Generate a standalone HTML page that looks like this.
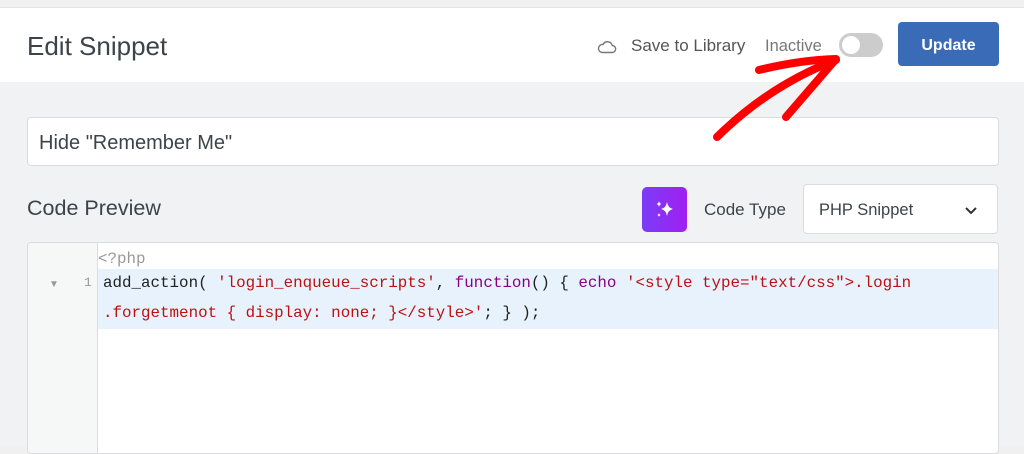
<!DOCTYPE html><html><head><style>
body{margin:0;width:1024px;height:446px;overflow:hidden;background:#f0f0f1;font-family:"Liberation Sans",sans-serif;position:relative}
.hdr{position:absolute;top:7px;left:0;width:1024px;height:74px;background:#fff;border-top:1px solid #e2e4e7;border-bottom:1px solid #dcdde0}
.body{position:absolute;top:82px;left:0;width:1024px;height:364px;background:#f1f2f4}
.abs{position:absolute}
.mono{font-family:"Liberation Mono",monospace;font-size:15.85px}
</style></head><body>
<div class="hdr">
<div class="abs" style="left:27px;top:23px;font-size:26px;color:#3c434a">Edit Snippet</div>
<svg class="abs" style="left:597px;top:32px" width="20" height="14" viewBox="0 0 20 14"><path d="M5 12.5h10a3.5 3.5 0 0 0 .3-7A5 5 0 0 0 6 4.5 4 4 0 0 0 5 12.5z" fill="none" stroke="#777" stroke-width="1.4"/></svg>
<div class="abs" style="left:631px;top:28px;font-size:17px;color:#555">Save to Library</div>
<div class="abs" style="left:765px;top:29px;font-size:16.5px;color:#777">Inactive</div>
<div class="abs" style="left:839px;top:25px;width:44px;height:24px;border-radius:12px;background:#ccc"><div style="position:absolute;left:3px;top:3px;width:18px;height:18px;border-radius:50%;background:#fff"></div></div>
<div class="abs" style="left:898px;top:14px;width:101px;height:44px;border-radius:4px;background:#3a6bb7;color:#fff;font-weight:bold;font-size:16px;text-align:center;line-height:48px">Update</div>
</div>
<div class="body"></div>
<div class="abs" style="left:27px;top:117px;width:970px;height:47px;background:#fff;border:1px solid #dcdcde;border-radius:4px"><div style="position:absolute;left:11px;top:14px;font-size:20px;color:#3c434a">Hide "Remember Me"</div></div>
<div class="abs" style="left:27px;top:196px;font-size:21.5px;color:#3c434a">Code Preview</div>
<div class="abs" style="left:642px;top:187px;width:45px;height:45px;border-radius:5px;background:linear-gradient(90deg,#7b3cf7,#a020f0)"><svg width="45" height="45" viewBox="0 0 45 45"><path d="M25 15q1 6 6 7-5 1-6 7-1-6-6-7 5-1 6-7z" fill="#fff"/><path d="M17 14q.5 2.5 2.5 3-2 .5-2.5 3-.5-2.5-2.5-3 2-.5 2.5-3z" fill="#fff"/><path d="M17 26q.4 1.7 1.8 2-1.4.3-1.8 2-.4-1.7-1.8-2 1.4-.3 1.8-2z" fill="#fff"/></svg></div>
<div class="abs" style="left:704px;top:200px;font-size:17px;color:#3c434a">Code Type</div>
<div class="abs" style="left:803px;top:184px;width:193px;height:48px;background:#fff;border:1px solid #dcdcde;border-radius:4px"><div style="position:absolute;left:15px;top:16px;font-size:16.5px;color:#3c434a">PHP Snippet</div><svg style="position:absolute;left:160px;top:21px" width="14" height="9"><path d="M2 2l5 5 5-5" fill="none" stroke="#333" stroke-width="2"/></svg></div>
<div class="abs" style="left:27px;top:242px;width:970px;height:210px;background:#fff;border:1px solid #dcdcde;border-radius:4px;overflow:hidden">
<div style="position:absolute;left:0;top:0;width:69px;height:100%;background:#f6f7f7;border-right:1px solid #dcdcde"></div>
<div style="position:absolute;left:70px;top:26px;width:900px;height:60px;background:#e8f2fd"></div>
<div class="mono" style="position:absolute;left:70px;top:7px;color:#999">&lt;?php</div>
<div style="position:absolute;left:21px;top:36px;font-size:10px;color:#999">▼</div>
<div class="mono" style="position:absolute;left:56px;top:32px;color:#999;font-size:13px">1</div>
<div class="mono" style="position:absolute;left:75px;top:31px;color:#222;white-space:pre">add_action( <span style="color:#b11">'login_enqueue_scripts'</span>, <span style="color:#808">function</span>() { <span style="color:#808">echo</span> <span style="color:#b11">'&lt;style type="text/css"&gt;.login</span></div>
<div class="mono" style="position:absolute;left:75px;top:61px;color:#222;white-space:pre"><span style="color:#b11">.forgetmenot { display: none; }&lt;/style&gt;'</span>; } );</div>
</div>
<svg class="abs" style="left:0;top:0" width="1024" height="446"><g fill="none" stroke="#f00" stroke-width="8" stroke-linecap="round" stroke-linejoin="round"><path d="M717 137Q770 85 836 60"/><path d="M759 70Q800 60 836 59L786 117"/></g></svg>
</body></html>
